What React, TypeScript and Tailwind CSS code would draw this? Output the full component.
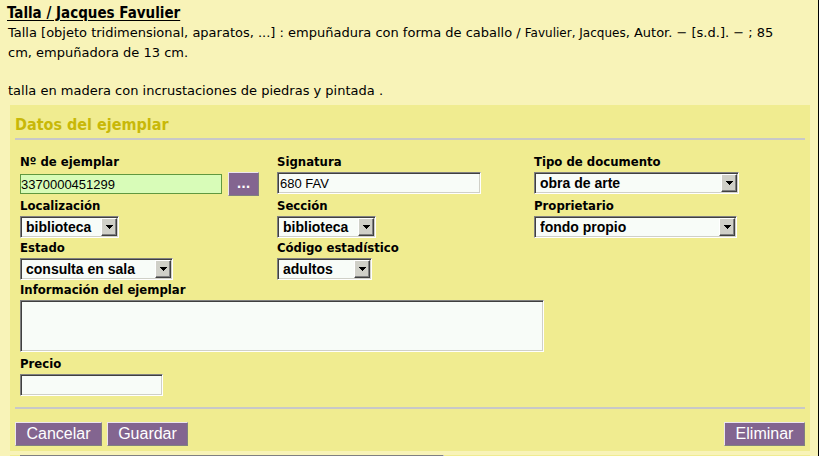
import type { ReactNode } from 'react';

const bevel =
  'border border-t-[#808080] border-l-[#808080] border-r-white border-b-white bg-[#f8fcf8] shadow-[inset_1px_1px_#404040,inset_-1px_-1px_#d0d0c8] rounded-none outline-none';

const raised =
  'h-6 border border-t-[#ece4f0] border-l-[#ece4f0] border-r-[#808080] border-b-[#808080] bg-[#836590] text-white';

const inputText = "font-['Liberation_Sans',Arial,sans-serif] text-[13px] text-black";

function Field({ id, label, children }: { id: string; label: string; children: ReactNode }) {
  return (
    <div>
      <label
        htmlFor={id}
        className="block font-['DejaVu_Sans_Condensed','DejaVu_Sans',Verdana,sans-serif] text-[13px] leading-5 font-bold"
      >
        {label}
      </label>
      {children}
    </div>
  );
}

function Select({ id, value, width }: { id: string; value: string; width: string }) {
  return (
    <div className={`relative h-[22px] ${width}`}>
      <select
        id={id}
        className={`block h-full w-full appearance-none pr-5 pl-[5px] font-['Liberation_Sans',Arial,sans-serif] text-[14px] leading-5 font-bold text-black ${bevel}`}
      >
        <option>{value}</option>
      </select>
      <span className="pointer-events-none absolute inset-y-0.5 right-0.5 flex w-4 items-center justify-center border border-t-white border-l-white border-r-[#404040] border-b-[#404040] bg-[#d0d0c8] shadow-[inset_-1px_-1px_#808080]">
        <svg width="7" height="4" viewBox="0 0 7 4" shapeRendering="crispEdges" aria-hidden="true">
          <path d="M0 0h7v1h-1v1h-1v1h-1v1h-1v-1h-1v-1h-1v-1h-1z" fill="#000" />
        </svg>
      </span>
    </div>
  );
}

export default function App() {
  return (
    <main className="h-screen overflow-hidden border-r border-black bg-[#f8f3b8] pt-[3px] font-['DejaVu_Sans',Verdana,sans-serif] text-black">
      <header className="pr-6 pl-2 text-[13px] leading-5">
        <h1 className="-ml-px font-['DejaVu_Sans_Condensed','DejaVu_Sans',Verdana,sans-serif] text-[15px] leading-5 font-bold underline underline-offset-2">
          Talla / Jacques Favulier
        </h1>
        <p>
          Talla [objeto tridimensional, aparatos, ...] : empuñadura con forma de caballo /{' '}
          <span className="text-[12px] leading-none">Favulier, Jacques</span>, Autor. − [s.d.]. − ; 85 cm,
          empuñadora de 13 cm.
        </p>
        <p className="mt-[18px]">talla en madera con incrustaciones de piedras y pintada .</p>
      </header>

      <form className="mt-1 mr-2 ml-2.5 bg-[#f0ec90] px-[5px] pb-[5px]" onSubmit={(e) => e.preventDefault()}>
        <h2 className="border-b-2 border-[#c8c8c8] pt-2.5 pb-[3px] font-['DejaVu_Sans_Condensed','DejaVu_Sans',Verdana,sans-serif] text-[16px] leading-5 font-bold text-[#c8b808]">
          Datos del ejemplar
        </h2>
        <div className="pt-3 pr-3.5 pl-[5px]">
          <div className="grid grid-cols-3">
            <Field id="numero" label="Nº de ejemplar">
              <div className="flex h-6 items-center gap-1.5">
                <input
                  id="numero"
                  defaultValue="3370000451299"
                  className={`h-5 w-[202px] border border-[#609840] bg-[#d8fcb8] outline-none ${inputText}`}
                />
                <button type="button" aria-label="Buscar ejemplar" className={`w-[31px] text-[12px] font-bold ${raised}`}>
                  ...
                </button>
              </div>
            </Field>
            <Field id="signatura" label="Signatura">
              <input id="signatura" defaultValue="680 FAV" className={`block h-[22px] w-[204px] px-0.5 ${inputText} ${bevel}`} />
            </Field>
            <Field id="tipo" label="Tipo de documento">
              <Select id="tipo" value="obra de arte" width="w-[205px]" />
            </Field>
            <Field id="localizacion" label="Localización">
              <Select id="localizacion" value="biblioteca" width="w-[99px]" />
            </Field>
            <Field id="seccion" label="Sección">
              <Select id="seccion" value="biblioteca" width="w-[99px]" />
            </Field>
            <Field id="proprietario" label="Proprietario">
              <Select id="proprietario" value="fondo propio" width="w-[203px]" />
            </Field>
            <Field id="estado" label="Estado">
              <Select id="estado" value="consulta en sala" width="w-[153px]" />
            </Field>
            <Field id="codigo" label="Código estadístico">
              <Select id="codigo" value="adultos" width="w-[95px]" />
            </Field>
          </div>
          <Field id="informacion" label="Información del ejemplar">
            <textarea id="informacion" className={`mb-0.5 block h-[52px] w-[524px] resize-none ${inputText} ${bevel}`} />
          </Field>
          <Field id="precio" label="Precio">
            <input id="precio" className={`block h-[22px] w-[143px] px-0.5 ${inputText} ${bevel}`} />
          </Field>
        </div>
        <div className="mt-[11px] flex gap-[5px] border-t-2 border-[#c8c8c8] pt-[13px] font-['Liberation_Sans',Arial,sans-serif] text-[16px] leading-5">
          <button type="button" className={`w-[87px] ${raised}`}>Cancelar</button>
          <button type="submit" className={`w-[81px] ${raised}`}>Guardar</button>
          <button type="button" className={`ml-auto w-[81px] ${raised}`}>Eliminar</button>
        </div>
      </form>

      <form className="mt-1 mr-2 ml-2.5 bg-[#f0ec90] px-2.5" onSubmit={(e) => e.preventDefault()}>
        <input aria-label="Ejemplar" className={`block h-[22px] w-[424px] ${inputText} ${bevel}`} />
      </form>
    </main>
  );
}
